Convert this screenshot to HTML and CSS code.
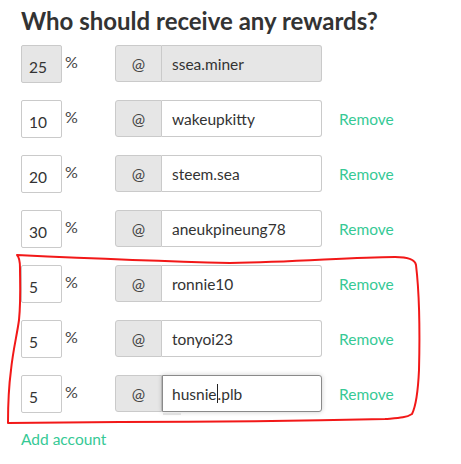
FILE: index.html
```html
<!DOCTYPE html>
<html>
<head>
<meta charset="utf-8">
<link rel="stylesheet" href="styles.css">
</head>
<body>
<div class="wrap">
  <h2 class="title">Who should receive any rewards?</h2>
  <div class="row">
    <div class="pctcol"><div class="pct disabled">25</div><span class="sign">%</span></div>
    <div class="group"><span class="addon">@</span><div class="acct disabled">ssea.miner</div></div>
  </div>
  <div class="row">
    <div class="pctcol"><div class="pct">10</div><span class="sign">%</span></div>
    <div class="group"><span class="addon">@</span><div class="acct">wakeupkitty</div></div>
    <a class="remove">Remove</a>
  </div>
  <div class="row">
    <div class="pctcol"><div class="pct">20</div><span class="sign">%</span></div>
    <div class="group"><span class="addon">@</span><div class="acct">steem.sea</div></div>
    <a class="remove">Remove</a>
  </div>
  <div class="row">
    <div class="pctcol"><div class="pct">30</div><span class="sign">%</span></div>
    <div class="group"><span class="addon">@</span><div class="acct">aneukpineung78</div></div>
    <a class="remove">Remove</a>
  </div>
  <div class="row">
    <div class="pctcol"><div class="pct">5</div><span class="sign">%</span></div>
    <div class="group"><span class="addon">@</span><div class="acct">ronnie10</div></div>
    <a class="remove">Remove</a>
  </div>
  <div class="row">
    <div class="pctcol"><div class="pct">5</div><span class="sign">%</span></div>
    <div class="group"><span class="addon">@</span><div class="acct">tonyoi23</div></div>
    <a class="remove">Remove</a>
  </div>
  <div class="row">
    <div class="pctcol"><div class="pct">5</div><span class="sign">%</span></div>
    <div class="group"><span class="addon">@</span><div class="acct focus">husnie<span class="caret"></span>.plb<span class="marker"></span></div></div>
    <a class="remove">Remove</a>
  </div>
  <a class="add">Add account</a>
</div>
<svg class="scribble" width="461" height="464" viewBox="0 0 461 464">
  <path d="M17,255 C60,257 150,261 230,263 C300,262 350,257 395,257 C408,257 415,259 416,265 C419,290 420,330 419,370 C418,392 415,408 412,414 C406,418 398,418 385,419 C300,421 200,422 120,422 L8,423 C8,400 9,385 11,370 C13,350 17,335 19,320 C21,300 20,280 20,268 C20,261 19,257 17,255"
        fill="none" stroke="#f21818" stroke-width="2" stroke-linejoin="round" stroke-linecap="round"/>
</svg>
</body>
</html>
```
FILE: styles.css
```css
html, body {
  margin: 0;
  padding: 0;
  background: #fff;
}
body {
  font-family: "Source Sans Pro", Lato, "Open Sans", sans-serif;
  color: #333;
  width: 461px;
  height: 464px;
  overflow: hidden;
  position: relative;
}
.wrap {
  padding: 6px 0 0 21px;
}
.title {
  margin: 0 0 9px 0;
  font-size: 24px;
  font-weight: 700;
  line-height: 30px;
  color: #333;
}
.row {
  display: flex;
  align-items: flex-start;
  height: 38px;
  margin-bottom: 17px;
}
.pctcol {
  display: flex;
  align-items: flex-start;
  width: 94px;
}
.pct {
  box-sizing: border-box;
  width: 41px;
  height: 38px;
  border: 1px solid #cacaca;
  border-radius: 2px;
  padding: 11px 0 0 7px;
  font-size: 15.5px;
  line-height: 20px;
  background: #fff;
}
.disabled {
  background: #e6e6e6;
}
.sign {
  margin: 7px 0 0 3px;
  font-size: 16px;
  line-height: 20px;
  color: #444;
}
.group {
  display: flex;
  box-sizing: border-box;
  width: 207px;
  height: 37px;
}
.addon {
  box-sizing: border-box;
  width: 47px;
  height: 37px;
  background: #e6e6e6;
  border: 1px solid #cacaca;
  border-radius: 3px 0 0 3px;
  display: flex;
  align-items: center;
  justify-content: center;
  font-size: 16px;
  color: #444;
}
.acct {
  position: relative;
  box-sizing: border-box;
  flex: 1;
  height: 37px;
  border: 1px solid #cacaca;
  border-left: none;
  border-radius: 0 3px 3px 0;
  padding: 0 0 0 10px;
  display: flex;
  align-items: center;
  font-size: 15.5px;
  color: #333;
  background: #fff;
}
.acct.disabled {
  background: #e6e6e6;
}
.acct.focus {
  border: 1px solid #8a8a8a;
  box-shadow: 0 0 5px rgba(0, 0, 0, 0.2);
  padding-left: 9px;
}
.caret {
  display: inline-block;
  width: 1px;
  height: 19px;
  background: #222;
}
.marker {
  position: absolute;
  left: 0;
  top: 37px;
  width: 18px;
  height: 2px;
  background: #e0e0e0;
}
.remove {
  margin: -1px 0 0 17px;
  align-self: center;
  font-size: 15.5px;
  color: #36c995;
  cursor: pointer;
}
.add {
  display: block;
  margin-top: 6px;
  font-size: 15.5px;
  color: #36c995;
  cursor: pointer;
}
.scribble {
  position: absolute;
  left: 0;
  top: 0;
  pointer-events: none;
}
```
